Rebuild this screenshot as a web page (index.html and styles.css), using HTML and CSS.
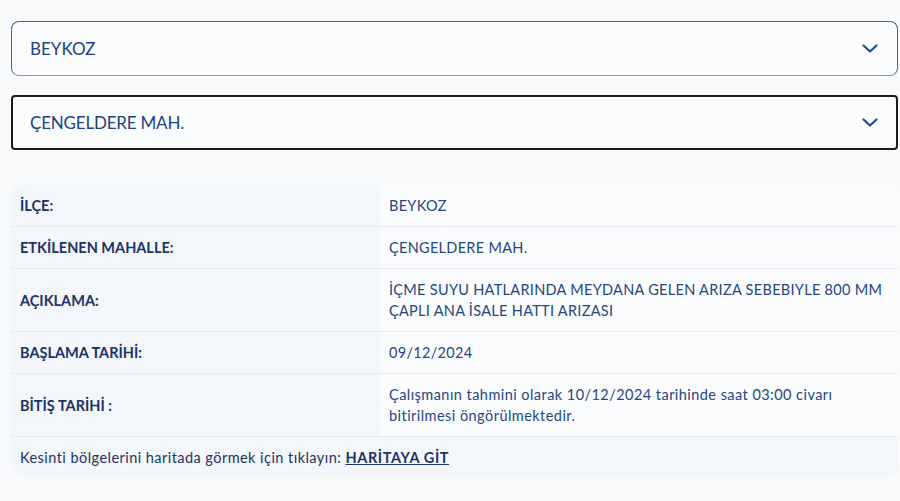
FILE: index.html
```html
<!DOCTYPE html>
<html lang="tr">
<head>
<meta charset="utf-8">
<link rel="stylesheet" href="styles.css">
</head>
<body>
<div class="page">
  <div class="select select-idle">
    <span class="select-text">BEYKOZ</span>
    <svg class="chev" width="16" height="9" viewBox="0 0 16 9"><path d="M1.5 1.5 L8 7.5 L14.5 1.5" fill="none" stroke="#1f4c8f" stroke-width="2.2" stroke-linecap="round" stroke-linejoin="round"/></svg>
  </div>
  <div class="select select-focus">
    <span class="select-text">ÇENGELDERE MAH.</span>
    <svg class="chev" width="16" height="9" viewBox="0 0 16 9"><path d="M1.5 1.5 L8 7.5 L14.5 1.5" fill="none" stroke="#1f4c8f" stroke-width="2.2" stroke-linecap="round" stroke-linejoin="round"/></svg>
  </div>

  <div class="info">
    <div class="row">
      <div class="label">İLÇE:</div>
      <div class="value">BEYKOZ</div>
    </div>
    <div class="row">
      <div class="label">ETKİLENEN MAHALLE:</div>
      <div class="value">ÇENGELDERE MAH.</div>
    </div>
    <div class="row">
      <div class="label">AÇIKLAMA:</div>
      <div class="value">İÇME SUYU HATLARINDA MEYDANA GELEN ARIZA SEBEBIYLE 800 MM ÇAPLI ANA İSALE HATTI ARIZASI</div>
    </div>
    <div class="row">
      <div class="label">BAŞLAMA TARİHİ:</div>
      <div class="value">09/12/2024</div>
    </div>
    <div class="row">
      <div class="label">BİTİŞ TARİHİ :</div>
      <div class="value value-text">Çalışmanın tahmini olarak 10/12/2024 tarihinde saat 03:00 civarı bitirilmesi öngörülmektedir.</div>
    </div>
    <div class="foot">Kesinti bölgelerini haritada görmek için tıklayın: <a class="maplink" href="#">HARİTAYA GİT</a></div>
  </div>
</div>
</body>
</html>
```

FILE: styles.css
```css
* { box-sizing: border-box; }
html, body { margin: 0; padding: 0; background: #f8fafc; }
body {
  font-family: "Lato", "Noto Sans", sans-serif;
  color: #1f3a6b;
}
.page {
  width: 898px;
  padding: 21px 0 0 11px;
  display: flex;
  flex-direction: column;
}
.select {
  height: 55px;
  display: flex;
  align-items: center;
  justify-content: space-between;
  padding: 0 19px 0 18px;
  background: #fafcfe;
  font-size: 17px;
  color: #21427c;
}
.select-idle {
  border: 1px solid #3a64a6;
  border-bottom-color: #7d9bc9;
  border-radius: 8px;
}
.select-focus {
  margin-top: 19px;
  border: 2px solid #1c1c1c;
  border-radius: 4px;
  padding-left: 17px;
  padding-right: 18px;
}
.select-focus .select-text { letter-spacing: -0.2px; }
.chev { display: block; }

.info {
  margin-top: 35px;
  border-radius: 12px;
  overflow: hidden;
  background: #f3f6fa;
  font-size: 14.5px;
  line-height: 21px;
}
.row {
  display: grid;
  grid-template-columns: 369px 1fr;
  border-bottom: 1.5px solid #e7ebf0;
}
.label {
  background: #f3f6fa;
  padding: 10px 9px;
  font-weight: 700;
  color: #1b3464;
  display: flex;
  align-items: center;
}
.value {
  background: #fafcfe;
  padding: 10px 14px 10px 9px;
  color: #26467f;
  letter-spacing: 0.3px;
  display: flex;
  align-items: center;
}
.value-text { letter-spacing: 0.45px; }
.foot {
  padding: 10px 9px 9px;
  color: #1b3464;
  letter-spacing: 0.45px;
}
.maplink {
  color: #1b3464;
  font-weight: 700;
  text-decoration: underline;
  letter-spacing: 0.6px;
}
```
